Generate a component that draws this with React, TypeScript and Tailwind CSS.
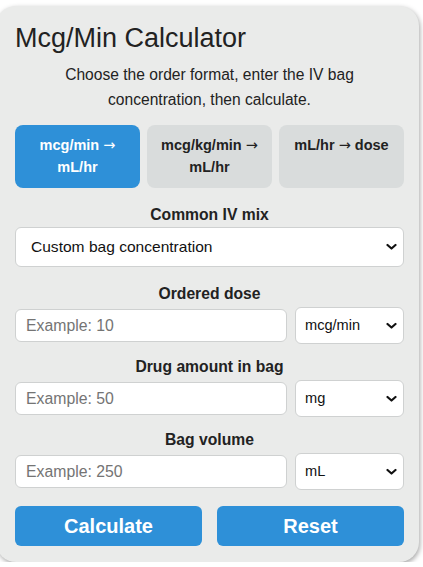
import { useState } from 'react';

const modes = [
  { id: 'mcgmin', from: 'mcg/min', to: 'mL/hr' },
  { id: 'mcgkgmin', from: 'mcg/kg/min', to: 'mL/hr' },
  { id: 'mlhr', from: 'mL/hr', to: 'dose' },
];

function Chevron() {
  return (
    <svg
      width="11"
      height="7"
      viewBox="0 0 11 7"
      className="pointer-events-none absolute right-[7px] top-1/2 -translate-y-1/2"
    >
      <path d="M1.5 1.5 L5.5 5 L9.5 1.5" fill="none" stroke="#111" strokeWidth="2.2" strokeLinecap="round" strokeLinejoin="round" />
    </svg>
  );
}

function UnitSelect({ options, value }: { options: string[]; value: string }) {
  return (
    <div className="relative w-[109px] shrink-0">
      <select
        defaultValue={value}
        className="h-[37px] w-full appearance-none rounded-[6px] border border-[#cfd1d1] bg-white pl-[9px] text-[14.6px] text-[#111] outline-none"
      >
        {options.map((o) => (
          <option key={o}>{o}</option>
        ))}
      </select>
      <Chevron />
    </div>
  );
}

function Field({ label, placeholder, units, unit }: { label: string; placeholder: string; units: string[]; unit: string }) {
  return (
    <div>
      <label className="block text-center text-[15.7px] font-bold leading-[18px] text-[#222]">{label}</label>
      <div className="mt-[4px] flex items-center gap-[8px]">
        <input
          placeholder={placeholder}
          className="h-[33px] min-w-0 flex-1 rounded-[6px] border border-[#cfd1d1] bg-white px-[10px] text-[15.8px] text-[#111] outline-none placeholder:text-[#747474]"
        />
        <UnitSelect options={units} value={unit} />
      </div>
    </div>
  );
}

export default function App() {
  const [mode, setMode] = useState('mcgmin');

  return (
    <div className="overflow-hidden bg-white pt-[6px]" style={{ fontFamily: '"Liberation Sans", Arial, sans-serif' }}>
      <div className="-ml-[4px] w-[423px] rounded-[20px] bg-[#eaebea] pb-[16px] pl-[19px] pr-[15px] pt-[16px] shadow-[1px_2px_5px_rgba(0,0,0,0.35)]">
        <h1 className="text-[27px] leading-[32px] font-normal text-[#222]">Mcg/Min Calculator</h1>
        <p className="mt-[8px] px-[40px] text-center text-[15.6px] leading-[25px] text-[#222]">
          Choose the order format, enter the IV bag concentration, then calculate.
        </p>

        <div className="mt-[13px] grid grid-cols-3 gap-[7px]">
          {modes.map((m) => {
            const active = m.id === mode;
            return (
              <button
                key={m.id}
                onClick={() => setMode(m.id)}
                className={
                  active
                    ? 'flex h-[63px] items-start justify-center rounded-[8px] bg-[#2e90d8] px-[10px] pt-[9px] text-center text-[14.5px] font-bold leading-[22px] text-white'
                    : 'flex h-[63px] items-start justify-center rounded-[8px] bg-[#d9dcdc] px-[10px] pt-[9px] text-center text-[14.5px] font-bold leading-[22px] text-[#222]'
                }
              >
                <span>
                  {m.from}{' '}
                  <span className="font-normal" style={{ fontFamily: '"DejaVu Sans", sans-serif' }}>
                    →
                  </span>{' '}
                  {m.to}
                </span>
              </button>
            );
          })}
        </div>

        <div className="mt-[18px]">
          <label className="block text-center text-[15.7px] font-bold leading-[18px] text-[#222]">Common IV mix</label>
          <div className="relative mt-[3px]">
            <select className="h-[40px] w-full appearance-none rounded-[6px] border border-[#cfd1d1] bg-white pl-[15px] text-[15.55px] text-[#111] outline-none">
              <option>Custom bag concentration</option>
              <option>Norepinephrine 4 mg / 250 mL</option>
              <option>Epinephrine 4 mg / 250 mL</option>
              <option>Phenylephrine 50 mg / 250 mL</option>
            </select>
            <Chevron />
          </div>
        </div>

        <div className="mt-[18px] flex flex-col gap-[14px]">
          <Field label="Ordered dose" placeholder="Example: 10" units={['mcg/min', 'mcg/kg/min', 'mg/hr']} unit="mcg/min" />
          <Field label="Drug amount in bag" placeholder="Example: 50" units={['mg', 'mcg', 'g']} unit="mg" />
          <Field label="Bag volume" placeholder="Example: 250" units={['mL', 'L']} unit="mL" />
        </div>

        <div className="mt-[16px] grid grid-cols-2 gap-[15px]">
          <button className="h-[40px] rounded-[6px] bg-[#2e90d8] text-[20px] font-bold text-white">Calculate</button>
          <button className="h-[40px] rounded-[6px] bg-[#2e90d8] text-[20px] font-bold text-white">Reset</button>
        </div>
      </div>
    </div>
  );
}
